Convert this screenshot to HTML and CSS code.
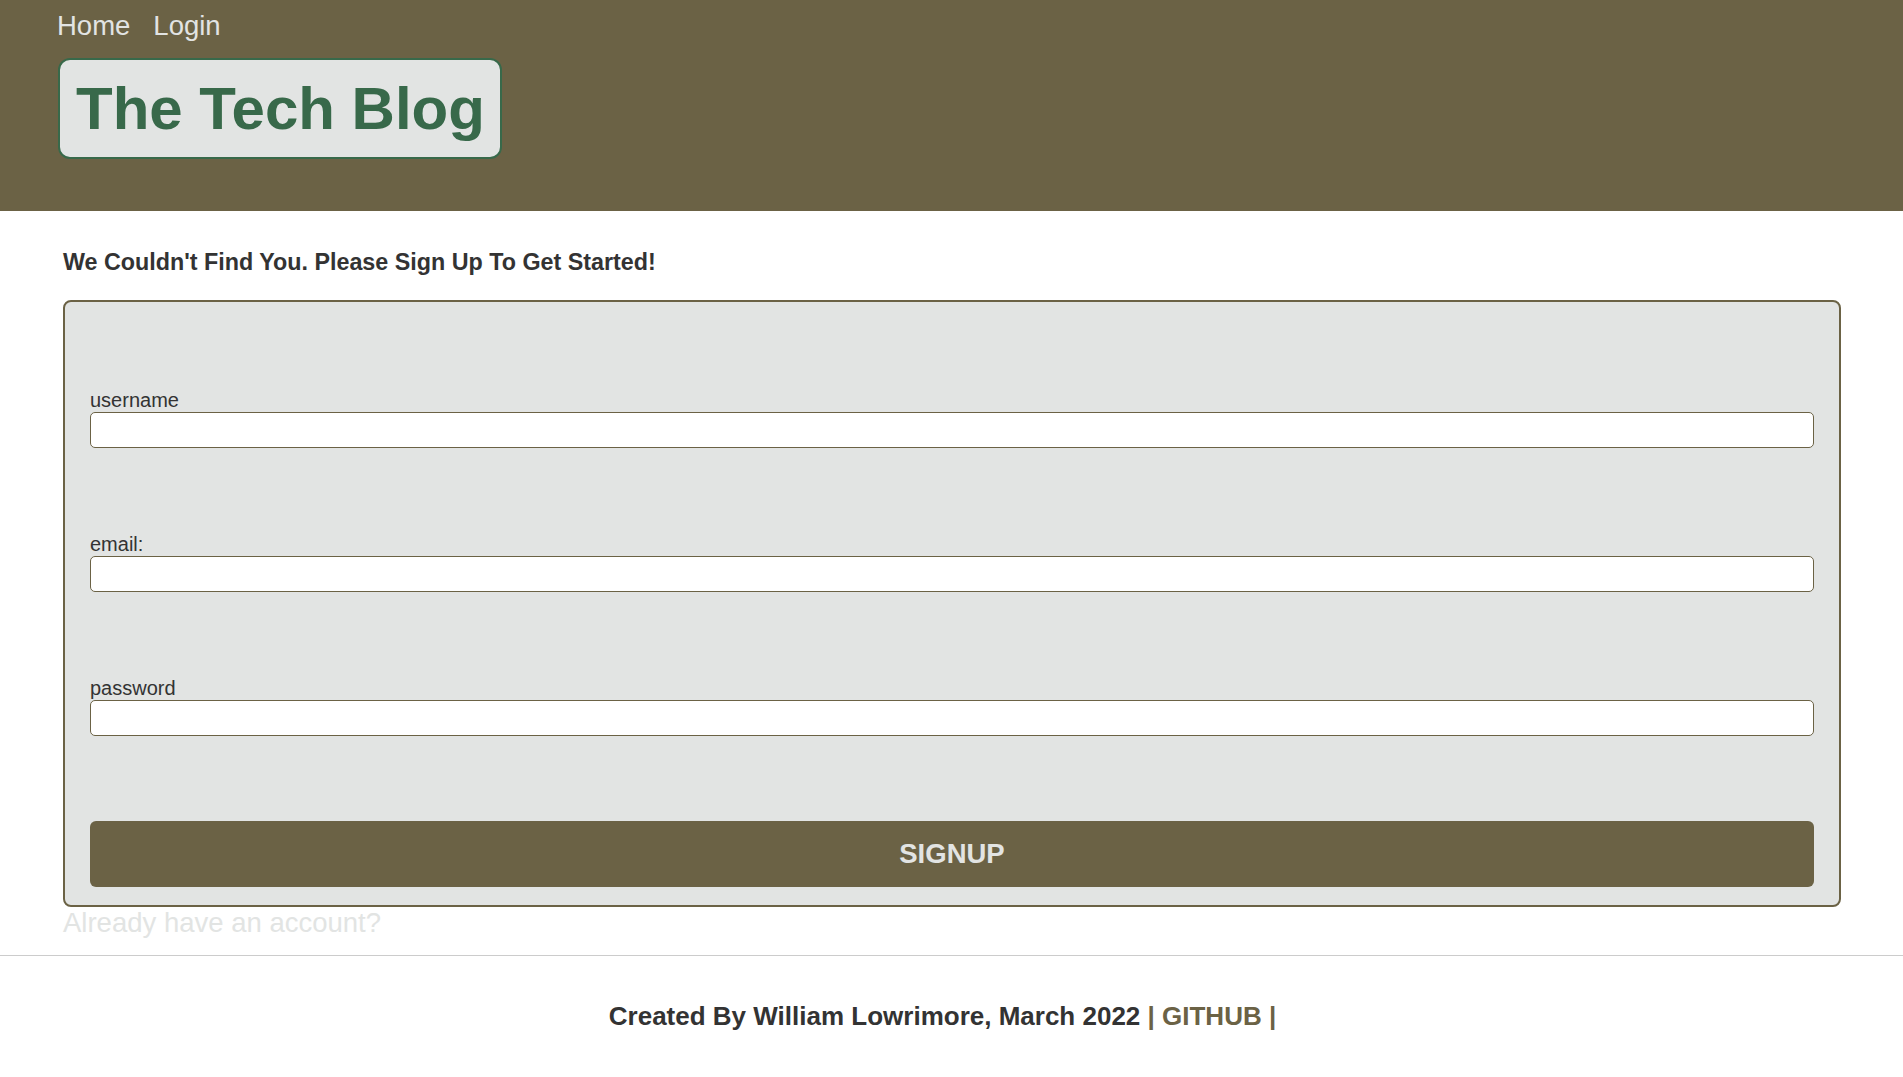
FILE: index.html
```html
<!DOCTYPE html>
<html lang="en">
    <head>
        <meta charset="UTF-8">
        <meta name="viewport" content="width=device-width, initial-scale=1.0">

        <title>The Tech Blog</title>
        <link rel="stylesheet" href="styles.css">
    </head>
    <body>
        <header>
            <nav>
                <ul>
                    <li><a href="#">Home</a></li>
                    <li><a href="#">Login</a></li>
                </ul>
            </nav>
            <h1 class="site-title">The Tech Blog</h1>
        </header>
        <main>
            <h2 class="notice">We Couldn't Find You. Please Sign Up To Get Started!</h2>
            <form class="signup-form">
                <div class="form-group">
                    <label for="username-signup">username</label>
                    <input type="text" id="username-signup">
                </div>
                <div class="form-group">
                    <label for="email-signup">email:</label>
                    <input type="email" id="email-signup">
                </div>
                <div class="form-group">
                    <label for="password-signup">password</label>
                    <input type="password" id="password-signup">
                </div>
                <button type="submit" class="btn">SIGNUP</button>
            </form>
            <a href="#" class="login-link">Already have an account?</a>
        </main>
        <footer>
            <p>Created By William Lowrimore, March 2022 <a href="#">| GITHUB |</a></p>
        </footer>
    </body>
</html>
```

FILE: styles.css
```css
body {
    font-family: "Liberation Sans", Arial, sans-serif;
    margin: 0;
    padding: 0;
    color: #333;
}

header {
    background-color: #6b6245;
    padding: 10px 0 52px 57px;
}

nav ul {
    list-style-type: none;
    display: flex;
    gap: 23px;
    margin: 0;
    padding: 0;
}

nav a {
    text-decoration: none;
    color: #e2e4e3;
    font-size: 27.5px;
}

.site-title {
    display: inline-block;
    margin: 16px 0 0 1px;
    padding: 14px 15px 14px 16px;
    font-size: 60px;
    color: #38694a;
    background-color: #e2e4e3;
    border: 2px solid #38694a;
    border-radius: 12px;
}

main {
    margin: 0 62px 0 63px;
}

.notice {
    font-size: 23.3px;
    margin: 38px 0 24px;
    color: #333;
}

.signup-form {
    display: flex;
    flex-direction: column;
    gap: 85px;
    background-color: #e2e4e3;
    border: 2px solid #6b6245;
    border-radius: 8px;
    padding: 87px 25px 18px;
}

.form-group label {
    display: block;
    font-size: 20px;
    color: #333;
}

.form-group input {
    display: block;
    width: 100%;
    height: 36px;
    box-sizing: border-box;
    border: 1px solid #6b6245;
    border-radius: 5px;
    background-color: #fff;
}

.btn {
    height: 66px;
    background-color: #6b6245;
    color: #e2e4e3;
    border: none;
    border-radius: 6px;
    font-family: inherit;
    font-size: 27.5px;
    font-weight: bold;
    cursor: pointer;
}

.login-link {
    display: block;
    font-size: 27.5px;
    color: #e2e4e3;
    text-decoration: none;
}

footer {
    margin-top: 16px;
    border-top: 1px solid #ccc;
    text-align: center;
}

footer p {
    margin: 0;
    padding: 45px 18px 0 0;
    font-size: 26px;
    font-weight: bold;
}

footer a {
    color: #6b6245;
    text-decoration: none;
}
```
